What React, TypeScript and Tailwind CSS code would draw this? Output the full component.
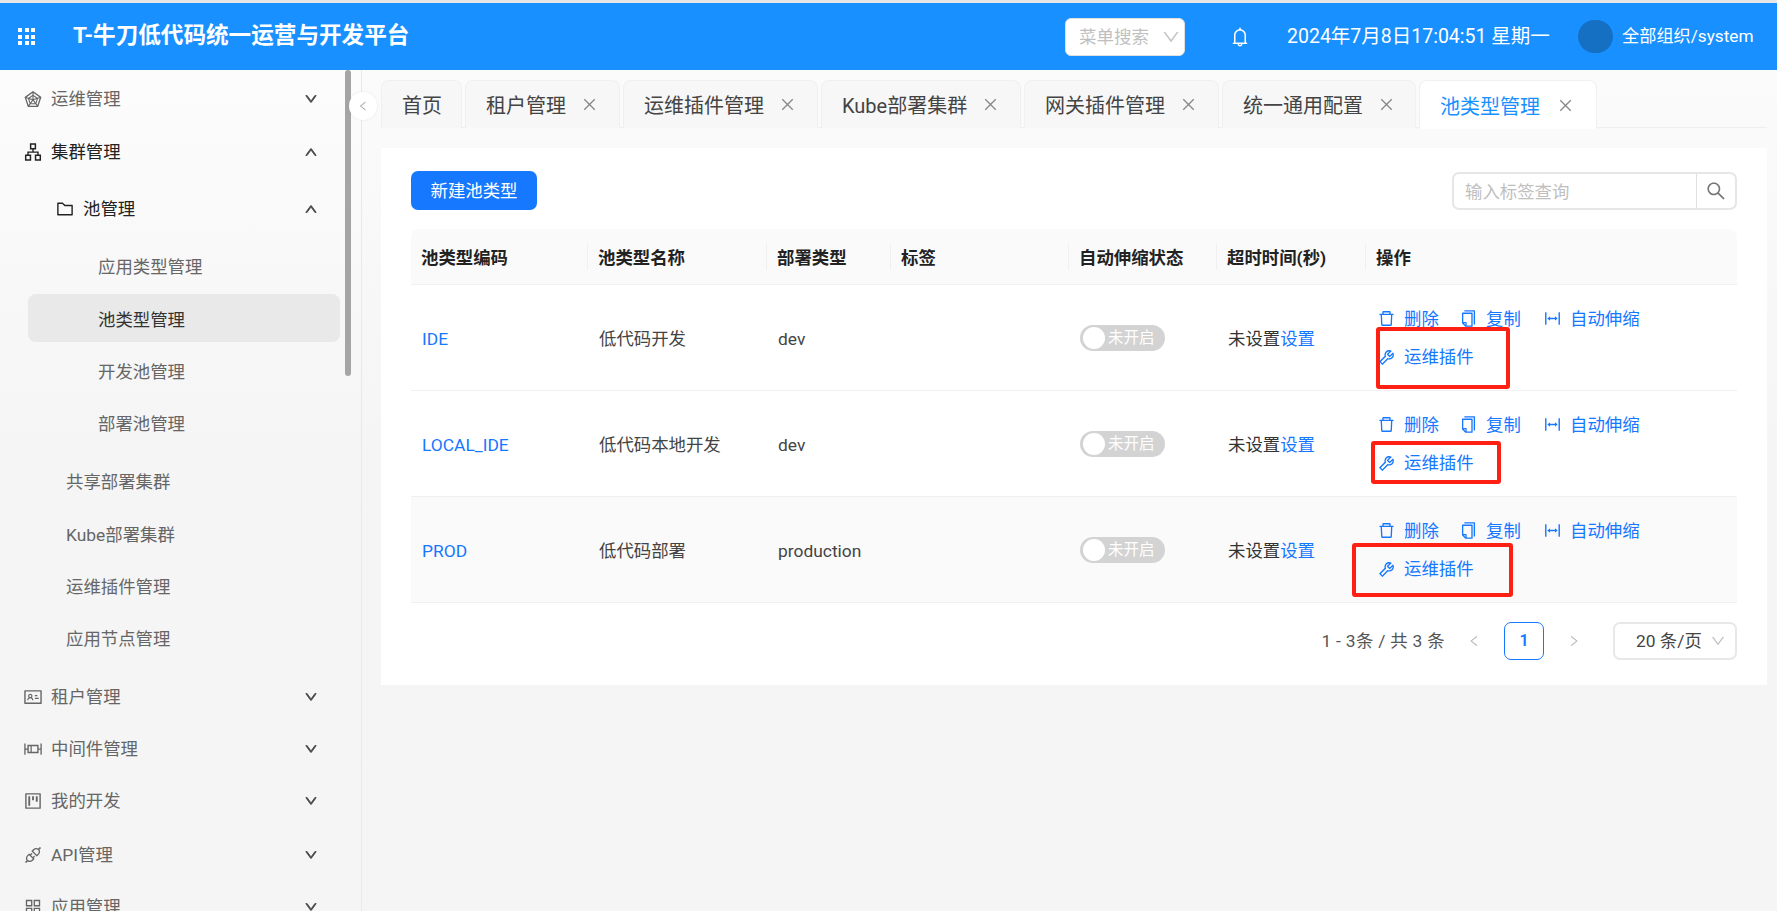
import React from "react";
import {
  AiOutlineRadarChart, AiOutlineApartment, AiOutlineFolder, AiOutlineIdcard, AiOutlineBoxPlot,
  AiOutlineProject, AiOutlineApi, AiOutlineAppstore, AiOutlineDelete, AiOutlineCopy,
  AiOutlineColumnWidth, AiOutlineTool, AiOutlineBell, AiOutlineSearch, AiOutlineClose,
  AiOutlineDown, AiOutlineUp, AiOutlineLeft, AiOutlineRight,
} from "react-icons/ai";

type MenuRow = { label: string; icon?: React.ReactNode; pad: string; open?: boolean; arrow?: boolean; cls?: string; active?: boolean };

const iconCls = "text-[20px] shrink-0";

const menu: MenuRow[] = [
  { label: "运维管理", icon: <AiOutlineRadarChart className={iconCls} />, pad: "pl-[23px]", arrow: true, cls: "mt-[3px] text-[#666]" },
  { label: "集群管理", icon: <AiOutlineApartment className={iconCls} />, pad: "pl-[23px]", arrow: true, open: true, cls: "mt-px text-[#222]" },
  { label: "池管理", icon: <AiOutlineFolder className={iconCls} />, pad: "pl-[55px]", arrow: true, open: true, cls: "mt-[5px] text-[#222]" },
  { label: "应用类型管理", pad: "pl-[98px] pt-[2px]", cls: "mt-[5px] text-[#666]" },
  { label: "池类型管理", pad: "pl-[98px] pt-[2px]", cls: "mt-[1px] text-[#333]", active: true },
  { label: "开发池管理", pad: "pl-[98px] pt-[2px]", cls: "text-[#666]" },
  { label: "部署池管理", pad: "pl-[98px] pt-[2px]", cls: "text-[#666]" },
  { label: "共享部署集群", pad: "pl-[66px] pt-[2px]", cls: "mt-[6px] text-[#666]" },
  { label: "Kube部署集群", pad: "pl-[66px] pt-[2px]", cls: "mt-px text-[#666]" },
  { label: "运维插件管理", pad: "pl-[66px] pt-[2px]", cls: "text-[#666]" },
  { label: "应用节点管理", pad: "pl-[66px] pt-[2px]", cls: "text-[#666]" },
  { label: "租户管理", icon: <AiOutlineIdcard className={iconCls} />, pad: "pl-[23px]", arrow: true, cls: "mt-[7px] text-[#666]" },
  { label: "中间件管理", icon: <AiOutlineBoxPlot className={iconCls} />, pad: "pl-[23px]", arrow: true, cls: "text-[#666]" },
  { label: "我的开发", icon: <AiOutlineProject className={iconCls} />, pad: "pl-[23px]", arrow: true, cls: "text-[#666]" },
  { label: "API管理", icon: <AiOutlineApi className={iconCls} />, pad: "pl-[23px]", arrow: true, cls: "mt-[2px] text-[#666]" },
  { label: "应用管理", icon: <AiOutlineAppstore className={iconCls} />, pad: "pl-[23px]", arrow: true, cls: "text-[#666]" },
];

const tabs = [
  { label: "首页", w: "w-[81px]", close: false, xml: "" },
  { label: "租户管理", w: "w-[155px]", close: true, xml: "ml-[15px]" },
  { label: "运维插件管理", w: "w-[195px]", close: true, xml: "ml-[15px]" },
  { label: "Kube部署集群", w: "w-[200px]", close: true, xml: "ml-[15px]" },
  { label: "网关插件管理", w: "w-[195px]", close: true, xml: "ml-[15px]" },
  { label: "统一通用配置", w: "w-[194px]", close: true, xml: "ml-[15px]" },
  { label: "池类型管理", w: "w-[178px]", close: true, active: true, xml: "ml-[17px]" },
];

const rows = [
  { code: "IDE", name: "低代码开发", type: "dev", cls: "" },
  { code: "LOCAL_IDE", name: "低代码本地开发", type: "dev", cls: "" },
  { code: "PROD", name: "低代码部署", type: "production", cls: "bg-[#fafafa]" },
];

const heads = [
  { t: "池类型编码", w: "w-[177px]" },
  { t: "池类型名称", w: "w-[179px]" },
  { t: "部署类型", w: "w-[124px]" },
  { t: "标签", w: "w-[178px]" },
  { t: "自动伸缩状态", w: "w-[148px]" },
  { t: "超时时间(秒)", w: "w-[149px]" },
  { t: "操作", w: "" },
];

function Action({ icon, label, cls }: { icon: React.ReactNode; label: string; cls: string }) {
  return (
    <a className={`inline-flex items-center text-[#1677ff] ${cls}`}>
      {icon}
      <span>{label}</span>
    </a>
  );
}

export default function App() {
  return (
    <div
      className="w-screen h-screen overflow-hidden flex flex-col bg-[#f5f5f5] text-[17.4px] text-[#333]"
      style={{ fontFamily: "Roboto,'Noto Sans CJK SC',sans-serif" }}
    >
      <div className="h-[3px] shrink-0 bg-[#e6e6e6]" />
      <header className="h-[67px] shrink-0 flex items-center bg-[#1890ff] text-white">
        <div className="ml-[18px] grid grid-cols-3 gap-[2.5px] w-[17px]">
          {Array.from({ length: 9 }).map((_, i) => (
            <span key={i} className="w-[4px] h-[4px] bg-white" />
          ))}
        </div>
        <h1 className="ml-[38px] text-[22.6px] leading-none font-bold">T-牛刀低代码统一运营与开发平台</h1>
        <div className="ml-auto w-[120px] h-[38px] rounded-[6px] bg-white border border-[#e0e0e0] flex items-center justify-between pl-[13px] pr-[3px] text-[#bfbfbf] text-[17.5px]">
          <span className="pt-[2px]">菜单搜索</span>
          <AiOutlineDown className="text-[20px] text-[#c4c4c4]" />
        </div>
        <AiOutlineBell className="ml-[44px] text-[22px]" />
        <span className="ml-[36px] w-[262px] text-[19.5px] whitespace-nowrap">2024年7月8日17:04:51 星期一</span>
        <span className="ml-[29px] w-[35px] h-[33px] rounded-full bg-[#1570c4]" />
        <span className="ml-[9px] w-[130px] mr-[25px] text-[17.2px] whitespace-nowrap">全部组织/system</span>
      </header>

      <div className="flex-1 flex min-h-0">
        <aside className="relative w-[362px] shrink-0 border-r border-[#e9e9e9] overflow-hidden bg-linear-to-b from-[#fcfcfc] to-[#f5f5f5] to-[45%]">
          {menu.map((m) => (
            <div key={m.label} className={`h-[52px] flex items-center shrink-0 ${m.pad} ${m.cls ?? ""} relative`}>
              {m.active && <div className="absolute left-[28px] w-[312px] top-[1px] h-[48px] rounded-[8px] bg-[#e9e9e9]" />}
              {m.icon && <span className="mr-[8px] flex">{m.icon}</span>}
              <span className="relative">{m.label}</span>
              {m.arrow && (
                <span className="absolute left-[304px] flex text-[#444]">
                  {m.open ? <AiOutlineUp className="text-[14px] stroke-[60]" /> : <AiOutlineDown className="text-[14px] stroke-[60]" />}
                </span>
              )}
            </div>
          ))}
          <div className="absolute left-[345px] top-0 w-[6px] h-[306px] rounded-[3px] bg-[#a5a5a5]" />
        </aside>

        <main className="relative flex-1 min-w-0 pl-[19px] pr-[10px] pt-[10px] bg-linear-to-b from-[#fbfbfb] to-[#f5f5f5] to-[45%]">
          <div className="absolute left-[-13px] top-[22px] w-[28px] h-[28px] rounded-full bg-white shadow-[0_0_3px_rgba(0,0,0,0.08)] flex items-center justify-center text-[#aaa]">
            <AiOutlineLeft className="text-[12px]" />
          </div>

          <div className="flex h-[48px] border-b border-[#eeeeee]">
            {tabs.map((t) => (
              <div
                key={t.label}
                className={`${t.w} shrink-0 mr-[3px] h-[48px] rounded-t-[8px] border border-b-0 flex items-center pl-[20px] text-[20px] whitespace-nowrap ${
                  t.active ? "bg-white border-[#f0f0f0] text-[#1890ff] h-[49px]" : "bg-[#f7f7f7] border-[#f0f0f0] text-[#444]"
                }`}
              >
                <span className="pt-[3px]">{t.label}</span>
                {t.close && <AiOutlineClose className={`${t.xml} text-[17px] text-[#888]`} />}
              </div>
            ))}
          </div>

          <section className="mt-[20px] h-[537px] bg-white px-[30px] pt-[23px]">
            <div className="flex items-center justify-between h-[39px]">
              <button className="w-[126px] h-[39px] rounded-[7px] bg-[#1677ff] text-white text-[17.4px] pt-[2px]">新建池类型</button>
              <div className="w-[285px] h-[38px] rounded-[7px] border-2 border-[#e6e6e6] flex items-center">
                <span className="flex-1 pl-[11px] pt-[3px] text-[#bfbfbf] text-[17.4px]">输入标签查询</span>
                <span className="w-[39px] h-full border-l border-[#e0e0e0] flex items-center justify-center text-[#777]">
                  <AiOutlineSearch className="text-[22px]" />
                </span>
              </div>
            </div>

            <table className="mt-[19px] w-full table-fixed border-collapse">
              <thead>
                <tr className="h-[55px] bg-[#fafafa] border-b border-[#f0f0f0]">
                  {heads.map((h, i) => (
                    <th
                      key={h.t}
                      className={`${h.w} relative text-left font-bold text-[#222] text-[17.4px] pl-[10px] pt-[3px] ${i === 0 ? "rounded-tl-[8px]" : ""} ${i === 6 ? "rounded-tr-[8px]" : ""}`}
                    >
                      {h.t}
                      {i < 6 && <span className="absolute right-0 top-[14px] h-[27px] w-px bg-[#f0f0f0]" />}
                    </th>
                  ))}
                </tr>
              </thead>
              <tbody>
                {rows.map((r) => (
                  <tr key={r.code} className={`h-[106px] border-b border-[#f0f0f0] ${r.cls}`}>
                    <td className="pl-[11px] pt-[4px] text-[#1677ff]">{r.code}</td>
                    <td className="pl-[11px] pt-[4px] text-[#444]">{r.name}</td>
                    <td className="pl-[11px] pt-[4px] text-[#444]">{r.type}</td>
                    <td />
                    <td className="pl-[11px]">
                      <div className="w-[85px] h-[26px] rounded-full bg-[#d3d3d3] flex items-center pl-[3px] mt-[2px]">
                        <span className="w-[22px] h-[22px] rounded-full bg-white" />
                        <span className="ml-[3px] pt-[2px] text-white text-[15.5px] leading-none">未开启</span>
                      </div>
                    </td>
                    <td className="pl-[11px] pt-[4px] text-[#333] whitespace-nowrap">
                      未设置<span className="text-[#1677ff]">设置</span>
                    </td>
                    <td className="pl-[11px] pt-[3px] text-[17.4px]">
                      <div className="h-[38px] flex items-center">
                        <Action icon={<AiOutlineDelete className="text-[19px] mr-[8px]" />} label="删除" cls="w-[82px]" />
                        <Action icon={<AiOutlineCopy className="text-[19px] mr-[8px]" />} label="复制" cls="w-[83px]" />
                        <Action icon={<AiOutlineColumnWidth className="text-[19px] mr-[8px]" />} label="自动伸缩" cls="pl-px" />
                      </div>
                      <div className="h-[39px] flex items-center">
                        <Action icon={<AiOutlineTool className="text-[19px] mr-[8px]" />} label="运维插件" cls="" />
                      </div>
                    </td>
                  </tr>
                ))}
              </tbody>
            </table>

            <div className="mt-[19px] h-[38px] flex items-center justify-end text-[#555]">
              <span className="text-[17.4px] mr-[22px] whitespace-nowrap tracking-[0.3px] pt-[2px]">1 - 3条 / 共 3 条</span>
              <AiOutlineLeft className="text-[14px] text-[#bbb] mr-[23px]" />
              <span className="w-[40px] h-[38px] rounded-[7px] border border-[#1677ff] text-[#1677ff] font-semibold flex items-center justify-center text-[16px]">1</span>
              <AiOutlineRight className="text-[14px] text-[#bbb] ml-[23px] mr-[32px]" />
              <div className="w-[124px] h-[38px] rounded-[7px] border-2 border-[#e8e8e8] flex items-center pl-[21px] justify-between pr-[9px] text-[17.4px] text-[#444]">
                <span className="whitespace-nowrap pt-[2px]">20 条/页</span>
                <AiOutlineDown className="text-[16px] text-[#c0c0c0]" />
              </div>
            </div>
          </section>

          <div className="absolute left-[1014px] top-[257px] w-[134px] h-[62px] rounded-[3px] border-[4px] border-[#ff2014]" />
          <div className="absolute left-[1009px] top-[371px] w-[130px] h-[43px] rounded-[3px] border-[4px] border-[#ff2014]" />
          <div className="absolute left-[990px] top-[473px] w-[161px] h-[54px] rounded-[3px] border-[4px] border-[#ff2014]" />
        </main>
      </div>
    </div>
  );
}
